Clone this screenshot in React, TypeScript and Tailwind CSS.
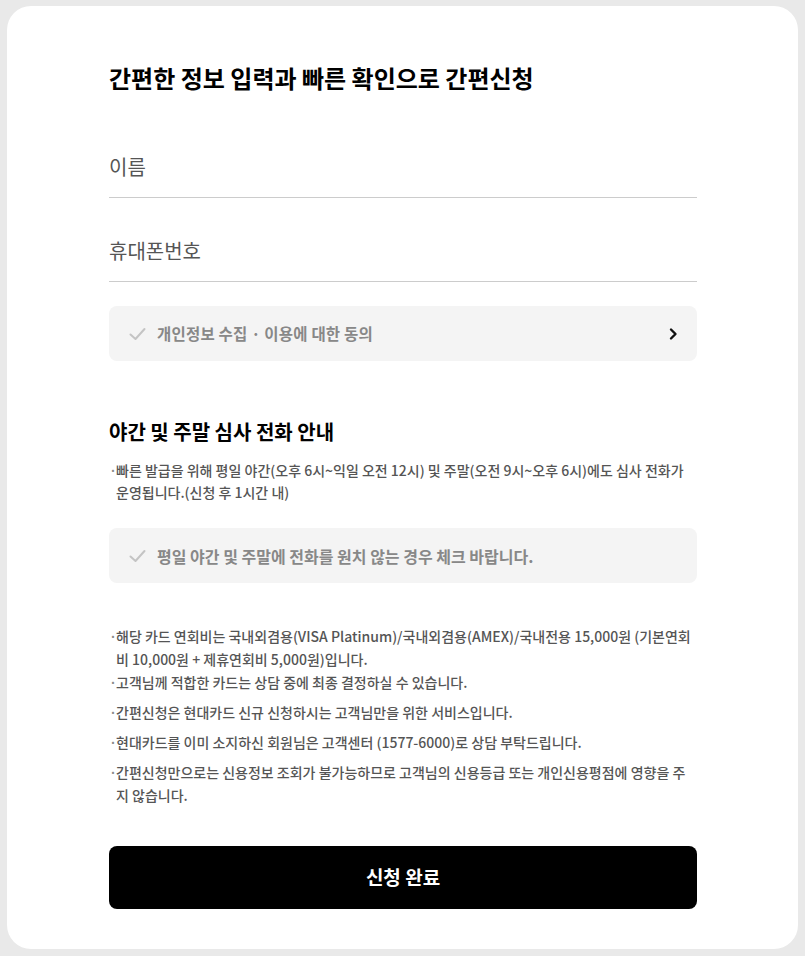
import React from 'react'

const font = { fontFamily: '"Noto Sans CJK KR", "Noto Sans", sans-serif' }

function Check() {
  return (
    <svg width="17" height="14" viewBox="0 0 17 14" fill="none" className="shrink-0">
      <path d="M1.5 7.5 L6.5 12 L15.5 2" stroke="#c4c4c4" strokeWidth="2" strokeLinecap="round" strokeLinejoin="round" />
    </svg>
  )
}

function Chevron() {
  return (
    <svg width="10" height="14" viewBox="0 0 10 14" fill="none" className="shrink-0">
      <path d="M3 2.5 L7.5 7 L3 11.5" stroke="#111" strokeWidth="2.4" strokeLinecap="round" strokeLinejoin="round" />
    </svg>
  )
}

function Note({ children, className = '' }: { children: React.ReactNode; className?: string }) {
  return (
    <li className={`flex ${className}`}>
      <span className="w-[7px] shrink-0 text-[#888]">·</span>
      <span>{children}</span>
    </li>
  )
}

export default function App() {
  return (
    <div className="min-h-[956px] bg-[#e9e9e9] pt-[6px] pb-[7px] px-[7px]" style={font}>
      <div className="bg-white rounded-[24px] h-[943px] pt-[56px] pl-[102px] pr-[101px] pb-[40px]">
        <div className="w-[588px]">
          <h1 className="text-[24px] leading-[32px] font-bold text-black">
            간편한 정보 입력과 빠른 확인으로 간편신청
          </h1>

          <div className="mt-[43px] h-[61px] flex items-center border-b border-[#cccccc] text-[20px] text-[#555]">
            이름
          </div>
          <div className="mt-[23px] h-[61px] flex items-center border-b border-[#cccccc] text-[20px] text-[#555]">
            휴대폰번호
          </div>

          <div className="mt-[24px] h-[55px] rounded-[8px] bg-[#f4f4f4] flex items-center pl-[20px] pr-[19px]">
            <Check />
            <span className="ml-[11px] text-[15.5px] font-bold text-[#888] flex-1 tracking-[0.2px]">개인정보 수집 · 이용에 대한 동의</span>
            <Chevron />
          </div>

          <h2 className="mt-[58px] text-[20px] leading-[26px] font-bold text-black">야간 및 주말 심사 전화 안내</h2>
          <ul className="mt-[14px] text-[14px] leading-[22px] font-medium text-[#555]">
            <Note>
              빠른 발급을 위해 평일 야간(오후 6시~익일 오전 12시) 및 주말(오전 9시~오후 6시)에도 심사 전화가 운영됩니다.(신청 후 1시간 내)
            </Note>
          </ul>

          <div className="mt-[25px] h-[55px] rounded-[8px] bg-[#f4f4f4] flex items-center pl-[20px] pr-[19px]">
            <Check />
            <span className="ml-[11px] text-[16px] font-bold text-[#888]">평일 야간 및 주말에 전화를 원치 않는 경우 체크 바랍니다.</span>
          </div>

          <ul className="mt-[42px] text-[14px] leading-[23px] font-medium text-[#555]">
            <Note>
              해당 카드 연회비는 국내외겸용(VISA Platinum)/국내외겸용(AMEX)/국내전용 15,000원 (기본연회비 10,000원 + 제휴연회비 5,000원)입니다.
            </Note>
            <Note>고객님께 적합한 카드는 상담 중에 최종 결정하실 수 있습니다.</Note>
            <Note className="mt-[7px]">간편신청은 현대카드 신규 신청하시는 고객님만을 위한 서비스입니다.</Note>
            <Note className="mt-[7px]">현대카드를 이미 소지하신 회원님은 고객센터 (1577-6000)로 상담 부탁드립니다.</Note>
            <Note className="mt-[7px]">
              간편신청만으로는 신용정보 조회가 불가능하므로 고객님의 신용등급 또는 개인신용평점에 영향을 주지 않습니다.
            </Note>
          </ul>

          <button className="mt-[39px] w-full h-[63px] rounded-[8px] bg-black text-white text-[19px] font-bold">
            신청 완료
          </button>
        </div>
      </div>
    </div>
  )
}
